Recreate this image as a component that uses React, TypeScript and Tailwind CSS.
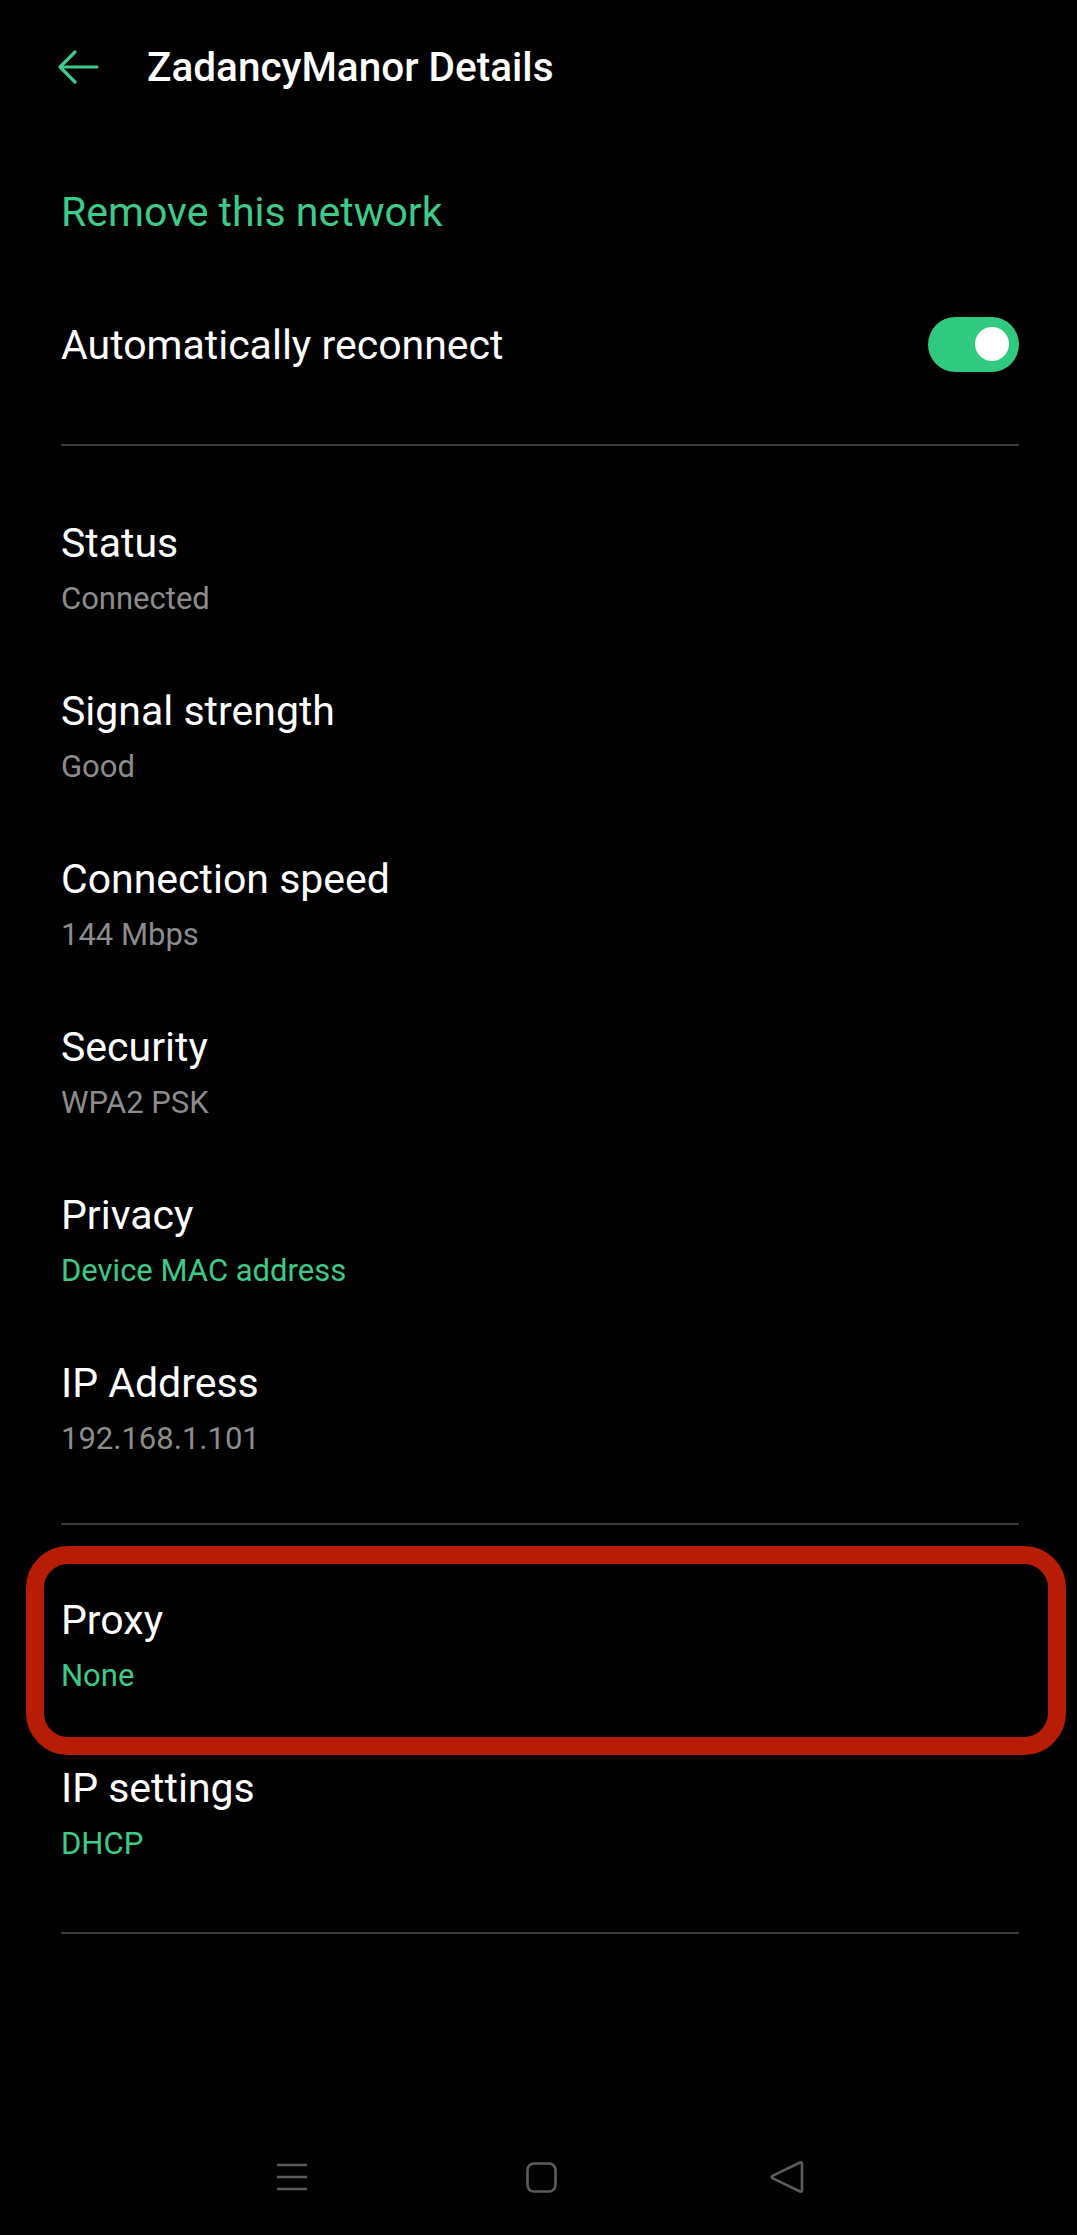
import React from "react";

const rows = [
  { title: "Status", value: "Connected", green: false },
  { title: "Signal strength", value: "Good", green: false },
  { title: "Connection speed", value: "144 Mbps", green: false },
  { title: "Security", value: "WPA2 PSK", green: false },
  { title: "Privacy", value: "Device MAC address", green: true },
  { title: "IP Address", value: "192.168.1.101", green: false },
];

function InfoRow({ title, value, green }: { title: string; value: string; green: boolean }) {
  return (
    <div className="flex flex-col">
      <p className="text-[41px] leading-[48px] text-white">{title}</p>
      <p className={"mt-[12px] text-[31px] leading-[40px] " + (green ? "text-[#3ccb88]" : "text-[#8c8c8c]")}>
        {value}
      </p>
    </div>
  );
}

export default function App() {
  return (
    <div className="h-screen w-full bg-black flex flex-col font-[Roboto,sans-serif] overflow-hidden">
      {/* top bar */}
      <div className="h-[134px] flex items-center pl-[57px]">
        <svg width="42" height="34" viewBox="0 0 42 34" fill="none">
          <path d="M40 17H3M18 2L3 17l15 15" stroke="#3ccb88" strokeWidth="3.2" strokeLinecap="round" strokeLinejoin="round" />
        </svg>
        <h1 className="ml-[48px] text-[40.5px] leading-[48px] font-medium text-white">ZadancyManor Details</h1>
      </div>

      <div className="px-[61px] pr-[58px] flex flex-col">
        <div className="h-[156px] flex items-center">
          <p className="text-[41px] leading-[48px] text-[#3ccb88]">Remove this network</p>
        </div>
        <div className="h-[110px] flex items-center justify-between">
          <p className="text-[41px] leading-[48px] text-white">Automatically reconnect</p>
          <div className="-mt-[2px] w-[91px] h-[55px] rounded-full bg-[#2fca80] flex items-center justify-end pr-[10px]">
            <div className="w-[34px] h-[34px] rounded-full bg-white" />
          </div>
        </div>
        <div className="mt-[44px] h-[2px] bg-[#3a3a3a]" />

        <div className="pt-[73px] flex flex-col gap-[68px]">
          {rows.map((r) => (
            <InfoRow key={r.title} {...r} />
          ))}
        </div>
        <div className="mt-[64px] h-[2px] bg-[#3a3a3a]" />

        <div className="pt-[71px] flex flex-col gap-[68px]">
          <div className="relative">
            <InfoRow title="Proxy" value="None" green={true} />
            <div className="absolute left-[-35px] right-[-47px] top-[-50px] bottom-[-59px] border-[18px] border-[#b71c06] rounded-[42px]" />
          </div>
          <InfoRow title="IP settings" value="DHCP" green={true} />
        </div>
        <div className="mt-[68px] h-[2px] bg-[#3a3a3a]" />
      </div>

      <div className="flex-1" />

      {/* nav bar */}
      <div className="h-[116px] flex items-center pl-[276px]">
        <svg width="32" height="28" viewBox="0 0 32 28" fill="none">
          <path d="M1 2h30M1 14h30M1 26h30" stroke="#5c5c5c" strokeWidth="2.4" />
        </svg>
        <svg className="ml-[218px]" width="31" height="31" viewBox="0 0 31 31" fill="none">
          <rect x="1.5" y="1.5" width="28" height="28" rx="6.5" stroke="#5c5c5c" strokeWidth="2.6" />
        </svg>
        <svg className="ml-[212px]" width="35" height="36" viewBox="0 0 35 36" fill="none">
          <path d="M31 3.5c1 -0.6 2 0 2 1.2v26.6c0 1.2 -1 1.8 -2 1.2L3.5 19.2c-1 -0.6 -1 -1.8 0 -2.4z" stroke="#5c5c5c" strokeWidth="2.6" strokeLinejoin="round" />
        </svg>
      </div>
    </div>
  );
}
